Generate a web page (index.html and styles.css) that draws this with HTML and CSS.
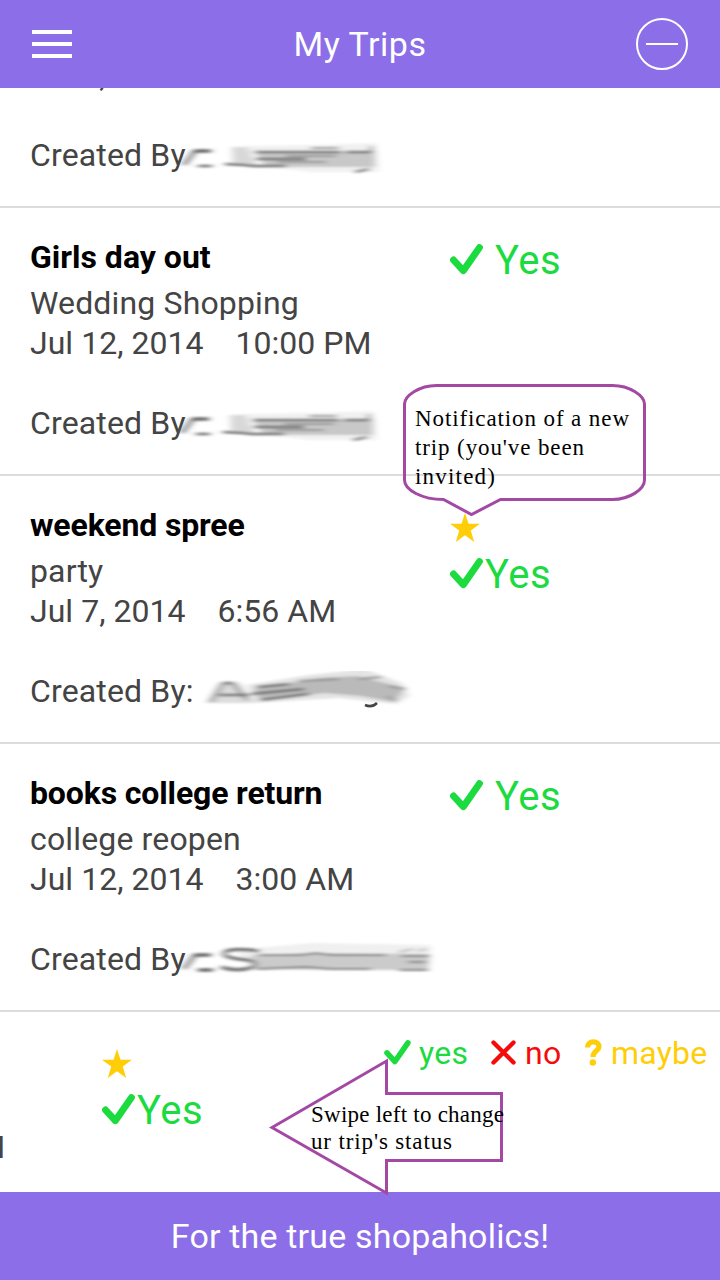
FILE: index.html
```html
<!DOCTYPE html>
<html lang="en">
<head>
<meta charset="utf-8">
<title>My Trips</title>
<link rel="stylesheet" href="styles.css">
</head>
<body>
<svg class="defs" width="0" height="0">
  <defs>
    <symbol id="check" viewBox="0 0 33 31"><path d="M3.500 16 13.300 26.700 29.400 3.600" fill="none" stroke="currentColor" stroke-width="6.900" stroke-linecap="round" stroke-linejoin="round"/></symbol>
    <symbol id="star" viewBox="0 0 30 29"><path d="M15 0 18.5 10.8H30L20.8 17.6 24.2 29 15 22.3 5.8 29 9.2 17.6 0 10.8H11.500Z" fill="#ffce08"/></symbol>
    <filter id="soft" x="-10%" y="-30%" width="120%" height="160%"><feGaussianBlur stdDeviation="3.500 0.900"/></filter>
    <g id="smudge-short">
      <path d="M62 1 130 0 195 -2 198 27H130L85 22Z" fill="#f1f1f1"/>
      <path d="M75 8 110 7 194 6 194 22H85Z" fill="#c8c8c8"/>
      <path d="M51 2H66L76 20 52 18Z" fill="#d8d8d8"/>
      <path d="M3 20 14 6H30" fill="none" stroke="#666" stroke-width="3.500"/>
      <path d="M17 21H31M44 19 64 20 72 21H105M74 7H160M75 14H125M165 7H190" fill="none" stroke="#707070" stroke-width="2.500"/>
      <path d="M96 17H145M105 11H155M130 3H158" fill="none" stroke="#999" stroke-width="2"/>
      <path d="M190 1V7M174 27 188 24" fill="none" stroke="#777" stroke-width="2.500"/>
    </g>
  </defs>
</svg>
<div class="screen">
  <header class="bar header">
    <div class="menu"><i></i><i></i><i></i></div>
    <h1 class="bar-title">My Trips</h1>
    <svg class="minus" width="52" height="52" viewBox="0 0 52 52" fill="none" stroke="#fff" stroke-width="2"><circle cx="26" cy="26" r="25"/><path d="M10 26H42"/></svg>
  </header>

  <main class="list">
    <section class="trip trip-cut">
      <div class="details">
        <p class="line date">Jul 7, 2014</p>
        <div class="line creator"><span>Created By</span><svg class="smudge" width="260" height="50" viewBox="-20 -10 260 50"><use href="#smudge-short" filter="url(#soft)"/></svg></div>
      </div>
    </section>

    <section class="trip">
      <div class="details">
        <h2 class="line name girls">Girls day out</h2>
        <p class="line">Wedding Shopping</p>
        <p class="line date">Jul 12, 2014 <span class="time">10:00 PM</span></p>
        <div class="line creator"><span>Created By</span><svg class="smudge" width="260" height="50" viewBox="-18 -10 260 50"><use href="#smudge-short" filter="url(#soft)"/></svg></div>
      </div>
      <div class="status"><svg class="check" width="33" height="31"><use href="#check"/></svg><span>Yes</span></div>
    </section>

    <section class="trip">
      <div class="details">
        <h2 class="line name">weekend spree</h2>
        <p class="line">party</p>
        <p class="line date">Jul 7, 2014 <span class="time">6:56 AM</span></p>
        <div class="line creator"><span>Created By:</span><svg class="smudge" width="260" height="50" viewBox="-20 -10 260 50"><g filter="url(#soft)">
          <path d="M17 22 30 1H50L66 22Z" fill="#ddd"/>
          <path d="M58 4 120 -6 175 -12 213 2 220 15 207 23 150 17 115 19 65 22Z" fill="#e4e4e4"/>
          <path d="M65 8 130 -3 168 -5 216 7 205 21 172 15 135 12 72 20Z" fill="#bababa"/>
          <path d="M22 21 35 2H43L58 19M30 14H60M68 6 100 3M62 13 115 8M72 19 120 13" fill="none" stroke="#707070" stroke-width="2.600"/>
          <path d="M110 0 150 -2M170 -2 192 -4M200 5 216 8M198 15 207 20" fill="none" stroke="#909090" stroke-width="2"/>
          </g><path d="M176 24Q183 27 188 22" fill="none" stroke="#444" stroke-width="2.500"/></svg></div>
      </div>
      <div class="status starred"><svg class="star" width="30" height="29"><use href="#star"/></svg><div class="answer"><svg class="check" width="33" height="31"><use href="#check"/></svg><span>Yes</span></div></div>
    </section>

    <section class="trip">
      <div class="details">
        <h2 class="line name">books college return</h2>
        <p class="line">college reopen</p>
        <p class="line date">Jul 12, 2014 <span class="time">3:00 AM</span></p>
        <div class="line creator"><span>Created By</span><svg class="smudge" width="290" height="50" viewBox="-20 -9 290 50"><g filter="url(#soft)">
          <path d="M55 2 130 -5 250 -3 247 23 70 22Z" fill="#f0f0f0"/>
          <path d="M70 7 130 5 249 6 247 22 75 21Z" fill="#cbcbcb"/>
          <path d="M3 21 14 7H30M17 22H32" fill="none" stroke="#666" stroke-width="3.500"/>
          <path d="M78 3Q43 -1 43 6 44 10 67 12 80 16 69 20 54 24 40 19" fill="none" stroke="#777" stroke-width="3.500"/>
          <path d="M78 7H120L135 5 150 7H205M75 21 125 19 150 21H190M220 8H248M227 14H245M218 22H247" fill="none" stroke="#858585" stroke-width="2.200"/>
          <path d="M218 4 232 1M237 3 246 1" fill="none" stroke="#bbb" stroke-width="2"/>
        </g></svg></div>
      </div>
      <div class="status"><svg class="check" width="33" height="31"><use href="#check"/></svg><span>Yes</span></div>
    </section>

    <section class="trip trip-swiped">
      <div class="details">
        <p class="line date">Jul 12, 2014 <span class="time">3:00 AM</span></p>
      </div>
      <div class="status starred"><svg class="star" width="30" height="29"><use href="#star"/></svg><div class="answer"><svg class="check" width="33" height="31"><use href="#check"/></svg><span>Yes</span></div></div>
      <div class="choices">
        <span class="choice yes"><svg width="27" height="25"><use href="#check"/></svg>yes</span>
        <span class="choice no"><svg width="25" height="25" viewBox="0 0 25 25"><path d="M2.500 2.500 22.500 22.500M22.500 2.500 2.500 22.500" stroke="currentColor" stroke-width="4.400" stroke-linecap="round"/></svg>no</span>
        <span class="choice maybe"><svg width="17" height="27" viewBox="0 0 17 27"><path d="M2.600 8.500C2.600 1 14 1 14 7.800C14 12 8 11.800 8 18" fill="none" stroke="currentColor" stroke-width="5.200"/><circle cx="7.800" cy="23.500" r="3.200" fill="currentColor"/></svg>maybe</span>
      </div>
    </section>
  </main>

  <footer class="bar footer">For the true shopaholics!</footer>

  <svg class="notes" width="720" height="1280" viewBox="0 0 720 1280">
    <g fill="none" stroke="#a349a4" stroke-width="3">
      <path d="M436.500 385.500H612.500C630 385.500 644.500 396 644.500 404V480C644.500 489 630 499.500 612.500 499.500H500.500L471.500 514.500 443.500 499.500C422 499.500 404.500 490 404.500 480V404C404.500 396 419 385.500 436.500 385.500Z"/>
      <path d="M272 1127.500 386.500 1061V1093.500H501.500V1160.500H386.500V1193Z"/>
    </g>
    <g class="note-text">
      <text x="415" y="426" textLength="214">Notification of a new</text>
      <text x="415" y="455" textLength="169">trip (you've been</text>
      <text x="415" y="484" textLength="80">invited)</text>
      <text x="311" y="1122" textLength="193">Swipe left to change</text>
      <text x="311" y="1149" textLength="141">ur trip's status</text>
    </g>
  </svg>
</div>
</body>
</html>
```
FILE: styles.css
```css
* { box-sizing: border-box; }
body { margin: 0; background: #fff; font-family: Roboto, sans-serif; }
h1, h2, p { margin: 0; }
svg { flex: none; }
.defs { position: absolute; }
.screen { position: relative; display: flex; flex-direction: column; width: 720px; height: 1280px; overflow: hidden; }

.bar { display: flex; align-items: center; flex: none; height: 88px; background: #8b6ee8; color: #fff; font-size: 34px; font-weight: 400; letter-spacing: 0.18px; }
.header { justify-content: space-between; padding: 0 32px; }
.menu { display: flex; flex-direction: column; gap: 8px; width: 52px; }
.menu i { width: 40px; height: 4px; background: #fff; }
.bar-title { font-size: inherit; font-weight: 400; letter-spacing: 0.5px; }
.footer { justify-content: center; }

.list { flex: 1; min-height: 0; overflow: hidden; }
.trip { display: flex; height: 268px; padding: 29px 0 0 30px; border-bottom: 2px solid #dcdcdc; }
.details { flex: none; width: 420px; }
.line { height: 40px; font-size: 32px; line-height: 40px; font-weight: 400; color: #444; white-space: nowrap; letter-spacing: 0.15px; }
.date { letter-spacing: 0.03px; }
.name { margin-bottom: 6px; color: #000; font-weight: 700; letter-spacing: -0.14px; }
.girls { letter-spacing: 0; }
.time { margin-left: 24px; }
.creator { display: flex; margin-top: 40px; }
.smudge { margin-left: -25px; }

.status { display: flex; align-items: flex-start; height: 40px; color: #1bdb3f; font-size: 40px; line-height: 48px; letter-spacing: 0.5px; }
.status > .check { margin: 7px 12px 0 0; }
.starred { flex-direction: column; padding-top: 8px; }
.answer { display: flex; margin-top: 9px; }
.answer .check { margin: 7px 2px 0 0; }

.trip-cut { height: 120px; padding-top: 0; }
.trip-cut .details { margin-top: -33px; }
.trip-swiped { height: 180px; margin-left: -348px; border: 0; }
.trip-swiped .date { margin: 86px 0 0 -1px; }
.choices { display: flex; margin: -8px 0 0 181px; font-size: 32px; line-height: 40px; letter-spacing: 0.2px; }
.choice { display: flex; align-items: flex-start; white-space: nowrap; }
.choice svg { margin: 7px 8px 0 0; }
.yes { width: 107px; color: #1bdb3f; }
.no { width: 94px; color: #f40c0c; }
.no svg { margin-right: 9px; }
.maybe { color: #ffce08; }
.maybe svg { margin: 6px 9px 0 0; }

.notes { position: absolute; left: 0; top: 0; }
.note-text { font-family: "Liberation Serif", serif; font-size: 23px; fill: #000; }
```
